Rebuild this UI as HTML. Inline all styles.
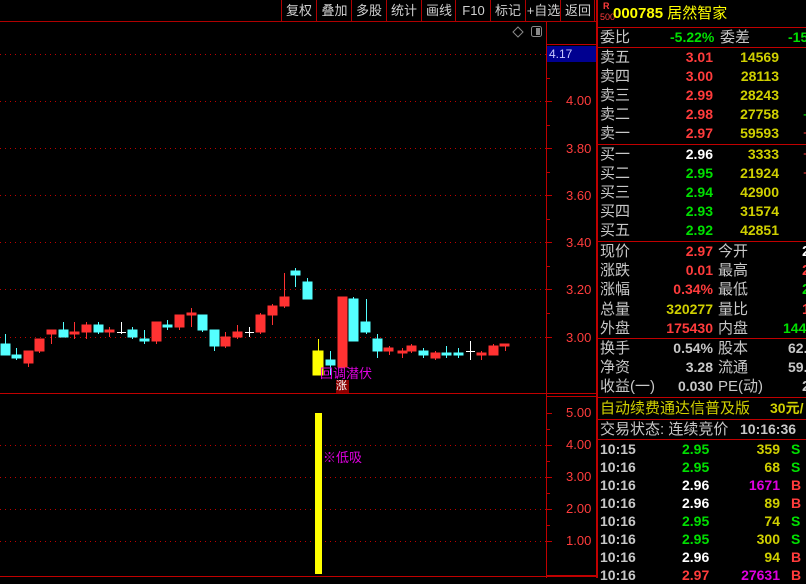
<!DOCTYPE html>
<html><head><meta charset="utf-8"><style>
body{margin:0;background:#000;width:806px;height:578px;overflow:hidden;position:relative;font-family:"Liberation Sans","Noto Sans CJK SC",sans-serif;}
.a{position:absolute;white-space:nowrap;}
.tb{position:absolute;top:0;height:21px;line-height:22px;font-size:13px;color:#d0d0d0;text-align:center;border-left:1px solid #b00000;}
.r{color:#ff3c3c}.g{color:#00e000}.w{color:#fff}.y{color:#d0d000}.gr{color:#c8c8c8}.m{color:#e000e0}
.row{position:absolute;left:600px;width:210px;height:19px;font-size:15px;line-height:19px;}
.row span{position:absolute;white-space:nowrap}
.lab{left:0;color:#c8c8c8}
.p{right:97px;text-align:right;font-weight:bold;font-size:14px}
.v{right:31px;text-align:right;font-weight:bold;font-size:14px}
.t{position:absolute;left:600px;width:206px;height:18px;font-size:14px;line-height:18px;font-weight:bold}
.t span{position:absolute;white-space:nowrap}
.hl{position:absolute;left:597px;width:209px;height:1px;background:#c00000}
.ax{position:absolute;left:566px;font-size:13px;color:#ff3c3c}
</style></head><body>
<div class="tb" style="left:281px;width:34px">复权</div>
<div class="tb" style="left:316px;width:35px">叠加</div>
<div class="tb" style="left:351px;width:34px">多股</div>
<div class="tb" style="left:386px;width:34px">统计</div>
<div class="tb" style="left:421px;width:34px">画线</div>
<div class="tb" style="left:455px;width:35px">F10</div>
<div class="tb" style="left:490px;width:34px">标记</div>
<div class="tb" style="left:525px;width:35px">+自选</div>
<div class="tb" style="left:560px;width:34px">返回</div>
<div class="a" style="left:594px;top:0;width:1px;height:21px;background:#b00000"></div>
<div class="a" style="left:0;top:21px;width:597px;height:1px;background:#b00000"></div>

<svg class="a" style="left:0;top:0" width="597" height="578">
<g stroke="#c00000" stroke-width="1" stroke-dasharray="1 4">
<line x1="0" y1="54.5" x2="546" y2="54.5"/><line x1="0" y1="101.5" x2="546" y2="101.5"/><line x1="0" y1="148.5" x2="546" y2="148.5"/><line x1="0" y1="195.5" x2="546" y2="195.5"/><line x1="0" y1="242.5" x2="546" y2="242.5"/><line x1="0" y1="289.5" x2="546" y2="289.5"/><line x1="0" y1="337.5" x2="546" y2="337.5"/>
<line x1="0" y1="445.5" x2="546" y2="445.5"/><line x1="0" y1="477.5" x2="546" y2="477.5"/><line x1="0" y1="509.5" x2="546" y2="509.5"/><line x1="0" y1="541.5" x2="546" y2="541.5"/>
</g>
<g stroke="#c00000">
<line x1="546.5" y1="22" x2="546.5" y2="578"/>
<line x1="596.5" y1="0" x2="596.5" y2="578"/>
<line x1="0" y1="393.5" x2="597" y2="393.5"/>
<line x1="0" y1="576.5" x2="597" y2="576.5"/>
<line x1="546" y1="44.5" x2="597" y2="44.5"/>
<line x1="546" y1="396.5" x2="597" y2="396.5"/>
<line x1="546" y1="575.5" x2="597" y2="575.5"/>
<g>
<line x1="547" y1="78.5" x2="550" y2="78.5"/><line x1="547" y1="101.5" x2="552" y2="101.5"/><line x1="547" y1="125.5" x2="550" y2="125.5"/><line x1="547" y1="148.5" x2="552" y2="148.5"/><line x1="547" y1="172.5" x2="550" y2="172.5"/><line x1="547" y1="195.5" x2="552" y2="195.5"/><line x1="547" y1="219.5" x2="550" y2="219.5"/><line x1="547" y1="242.5" x2="552" y2="242.5"/><line x1="547" y1="266.5" x2="550" y2="266.5"/><line x1="547" y1="289.5" x2="552" y2="289.5"/><line x1="547" y1="313.5" x2="550" y2="313.5"/><line x1="547" y1="337.5" x2="552" y2="337.5"/>
<line x1="547" y1="413.5" x2="552" y2="413.5"/><line x1="547" y1="429.5" x2="550" y2="429.5"/><line x1="547" y1="445.5" x2="552" y2="445.5"/><line x1="547" y1="461.5" x2="550" y2="461.5"/><line x1="547" y1="477.5" x2="552" y2="477.5"/><line x1="547" y1="493.5" x2="550" y2="493.5"/><line x1="547" y1="509.5" x2="552" y2="509.5"/><line x1="547" y1="525.5" x2="550" y2="525.5"/><line x1="547" y1="541.5" x2="552" y2="541.5"/>
</g></g>
<rect x="547" y="46" width="49" height="16" fill="#000090"/>
<path d="M518 27 L523 32 L518 37 L513 32 Z" fill="none" stroke="#888"/>
<rect x="531.5" y="26.5" width="10" height="10" rx="2" fill="none" stroke="#888"/><rect x="536" y="28" width="4" height="7" fill="#888"/>
<rect x="315" y="413" width="7" height="161" fill="#ffff00"/>
<rect x="336" y="380" width="13" height="13" fill="#8a0000"/>
</svg>
<svg class="a" style="left:0;top:0" width="546" height="393">
<g stroke-width="1">
<g fill="#54ffff" stroke="#54ffff">
<line x1="5.5" y1="334" x2="5.5" y2="355"/><rect x="1" y="344" width="9" height="11"/>
<line x1="16.5" y1="348" x2="16.5" y2="360"/><rect x="12" y="355" width="9" height="3"/>
<line x1="63.5" y1="322" x2="63.5" y2="337"/><rect x="59" y="330" width="9" height="7"/>
<line x1="98.5" y1="322" x2="98.5" y2="334"/><rect x="94" y="325" width="9" height="7"/>
<line x1="132.5" y1="327" x2="132.5" y2="339"/><rect x="128" y="330" width="9" height="7"/>
<line x1="144.5" y1="330" x2="144.5" y2="344"/><rect x="140" y="339" width="9" height="2"/>
<line x1="167.5" y1="320" x2="167.5" y2="330"/><rect x="163" y="325" width="9" height="2"/>
<line x1="202.5" y1="315" x2="202.5" y2="332"/><rect x="198" y="315" width="9" height="15"/>
<line x1="214.5" y1="330" x2="214.5" y2="351"/><rect x="210" y="330" width="9" height="16"/>
<line x1="295.5" y1="268" x2="295.5" y2="287"/><rect x="291" y="271" width="9" height="4"/>
<line x1="307.5" y1="278" x2="307.5" y2="299"/><rect x="303" y="282" width="9" height="17"/>
<line x1="330.5" y1="351" x2="330.5" y2="375"/><rect x="326" y="360" width="9" height="5"/>
<line x1="353.5" y1="297" x2="353.5" y2="341"/><rect x="349" y="299" width="9" height="42"/>
<line x1="366.5" y1="299" x2="366.5" y2="334"/><rect x="361" y="322" width="9" height="10"/>
<line x1="377.5" y1="334" x2="377.5" y2="358"/><rect x="373" y="339" width="9" height="12"/>
<line x1="423.5" y1="348" x2="423.5" y2="358"/><rect x="419" y="351" width="9" height="4"/>
<line x1="446.5" y1="346" x2="446.5" y2="358"/><rect x="442" y="353" width="9" height="2"/>
<line x1="458.5" y1="348" x2="458.5" y2="358"/><rect x="454" y="353" width="9" height="2"/>
</g>
<g fill="#ff3232" stroke="#ff3232">
<line x1="28.5" y1="351" x2="28.5" y2="367"/><rect x="24" y="351" width="9" height="12"/>
<rect x="35" y="339" width="9" height="12"/><line x1="39.5" y1="339" x2="39.5" y2="353"/>
<line x1="51.5" y1="330" x2="51.5" y2="344"/><rect x="47" y="330" width="9" height="4"/>
<line x1="74.5" y1="322" x2="74.5" y2="339"/><rect x="70" y="332" width="9" height="2"/>
<line x1="86.5" y1="322" x2="86.5" y2="339"/><rect x="82" y="325" width="9" height="7"/>
<line x1="109.5" y1="327" x2="109.5" y2="337"/><rect x="105" y="330" width="9" height="2"/>
<line x1="156.5" y1="322" x2="156.5" y2="344"/><rect x="152" y="322" width="9" height="19"/>
<line x1="179.5" y1="315" x2="179.5" y2="330"/><rect x="175" y="315" width="9" height="12"/>
<line x1="191.5" y1="308" x2="191.5" y2="327"/><rect x="187" y="313" width="9" height="2"/>
<line x1="225.5" y1="332" x2="225.5" y2="348"/><rect x="221" y="337" width="9" height="9"/>
<line x1="237.5" y1="325" x2="237.5" y2="339"/><rect x="233" y="332" width="9" height="5"/>
<line x1="260.5" y1="313" x2="260.5" y2="334"/><rect x="256" y="315" width="9" height="17"/>
<line x1="272.5" y1="304" x2="272.5" y2="325"/><rect x="268" y="306" width="9" height="9"/>
<line x1="284.5" y1="273" x2="284.5" y2="308"/><rect x="280" y="297" width="9" height="9"/>
<rect x="338" y="297" width="9" height="70"/>
<line x1="389.5" y1="346" x2="389.5" y2="355"/><rect x="384" y="348" width="9" height="3"/>
<line x1="402.5" y1="348" x2="402.5" y2="358"/><rect x="398" y="351" width="9" height="2"/>
<line x1="411.5" y1="344" x2="411.5" y2="353"/><rect x="407" y="346" width="9" height="5"/>
<line x1="435.5" y1="351" x2="435.5" y2="360"/><rect x="431" y="353" width="9" height="5"/>
<line x1="481.5" y1="351" x2="481.5" y2="360"/><rect x="477" y="353" width="9" height="2"/>
<line x1="493.5" y1="344" x2="493.5" y2="355"/><rect x="489" y="346" width="9" height="9"/>
<line x1="505.5" y1="344" x2="505.5" y2="351"/><rect x="500" y="344" width="9" height="2"/>
</g>
<g stroke="#fff">
<line x1="121.5" y1="322" x2="121.5" y2="334"/><line x1="117" y1="332.5" x2="126" y2="332.5"/>
<line x1="249.5" y1="327" x2="249.5" y2="337"/><line x1="245" y1="332.5" x2="254" y2="332.5"/>
<line x1="470.5" y1="341" x2="470.5" y2="360"/><line x1="466" y1="351.5" x2="475" y2="351.5"/>
</g>
<g fill="#ffff00" stroke="#ffff00"><line x1="318.5" y1="339" x2="318.5" y2="351"/><rect x="313" y="351" width="10" height="24"/></g>
</g>
</svg>
<div class="a m" style="left:320px;top:366px;font-size:13px;line-height:16px">回调潜伏</div>
<div class="a" style="left:336px;top:379px;font-size:11px;color:#fff;line-height:14px">涨</div>
<div class="a m" style="left:323px;top:447px;font-size:13px">※低吸</div>

<div class="a" style="left:549px;top:46px;font-size:12px;color:#c8c8ff;line-height:16px">4.17</div>
<div class="ax" style="top:93px">4.00</div><div class="ax" style="top:141px">3.80</div><div class="ax" style="top:188px">3.60</div><div class="ax" style="top:235px">3.40</div><div class="ax" style="top:282px">3.20</div><div class="ax" style="top:330px">3.00</div>
<div class="ax" style="top:405px">5.00</div><div class="ax" style="top:437px">4.00</div><div class="ax" style="top:469px">3.00</div><div class="ax" style="top:501px">2.00</div><div class="ax" style="top:533px">1.00</div>

<div class="a" style="left:597px;top:0;width:1px;height:578px;background:#c00000"></div>
<div class="a" style="left:603px;top:2px;font-size:9px;color:#ff3c3c;line-height:9px;font-weight:bold">R</div>
<div class="a" style="left:600px;top:12px;font-size:9px;color:#ff3c3c;line-height:10px">500</div>
<div class="a" style="left:613px;top:4px;font-size:15px;color:#ffff00;line-height:20px"><b>000785</b> 居然智家</div>
<div class="hl" style="top:27px"></div>
<div class="row" style="top:28px"><span class="lab">委比</span><span class="g" style="left:70px;font-weight:bold;font-size:14px">-5.22%</span><span class="lab" style="left:120px">委差</span><span class="g" style="left:188px;font-weight:bold;font-size:14px">-15</span></div>
<div class="hl" style="top:47px"></div>
<div class="row" style="top:48px"><span class="lab">卖五</span><span class="p r">3.01</span><span class="v y">14569</span></div>
<div class="row" style="top:67px"><span class="lab">卖四</span><span class="p r">3.00</span><span class="v y">28113</span></div>
<div class="row" style="top:86px"><span class="lab">卖三</span><span class="p r">2.99</span><span class="v y">28243</span></div>
<div class="row" style="top:105px"><span class="lab">卖二</span><span class="p r">2.98</span><span class="v y">27758</span><span class="g" style="left:203px">-</span></div>
<div class="row" style="top:124px"><span class="lab">卖一</span><span class="p r">2.97</span><span class="v y">59593</span><span class="r" style="left:203px">+</span></div>
<div class="hl" style="top:144px"></div>
<div class="row" style="top:145px"><span class="lab">买一</span><span class="p w">2.96</span><span class="v y">3333</span><span class="r" style="left:203px">+</span></div>
<div class="row" style="top:164px"><span class="lab">买二</span><span class="p g">2.95</span><span class="v y">21924</span><span class="r" style="left:203px">+</span></div>
<div class="row" style="top:183px"><span class="lab">买三</span><span class="p g">2.94</span><span class="v y">42900</span></div>
<div class="row" style="top:202px"><span class="lab">买四</span><span class="p g">2.93</span><span class="v y">31574</span></div>
<div class="row" style="top:221px"><span class="lab">买五</span><span class="p g">2.92</span><span class="v y">42851</span></div>
<div class="hl" style="top:241px"></div>
<div class="row" style="top:242px"><span class="lab">现价</span><span class="p r">2.97</span><span class="lab" style="left:118px">今开</span><span class="w" style="left:202px;font-weight:bold">2</span></div>
<div class="row" style="top:261px"><span class="lab">涨跌</span><span class="p r">0.01</span><span class="lab" style="left:118px">最高</span><span class="r" style="left:202px;font-weight:bold">2</span></div>
<div class="row" style="top:280px"><span class="lab">涨幅</span><span class="p r">0.34%</span><span class="lab" style="left:118px">最低</span><span class="g" style="left:202px;font-weight:bold">2</span></div>
<div class="row" style="top:300px"><span class="lab">总量</span><span class="p y">320277</span><span class="lab" style="left:118px">量比</span><span class="r" style="left:202px;font-weight:bold">1</span></div>
<div class="row" style="top:319px"><span class="lab">外盘</span><span class="p r">175430</span><span class="lab" style="left:118px">内盘</span><span class="g" style="left:183px;font-weight:bold;font-size:14px">144</span></div>
<div class="hl" style="top:338px"></div>
<div class="row" style="top:339px"><span class="lab">换手</span><span class="p gr">0.54%</span><span class="lab" style="left:118px">股本</span><span class="gr" style="left:188px;font-weight:bold;font-size:14px">62.</span></div>
<div class="row" style="top:358px"><span class="lab">净资</span><span class="p gr">3.28</span><span class="lab" style="left:118px">流通</span><span class="gr" style="left:188px;font-weight:bold;font-size:14px">59.</span></div>
<div class="row" style="top:377px"><span class="lab">收益(一)</span><span class="p gr">0.030</span><span class="lab" style="left:118px">PE(动)</span><span class="gr" style="left:202px;font-weight:bold">2</span></div>
<div class="hl" style="top:397px"></div>
<div class="row" style="top:399px;color:#d0d000"><span style="left:0">自动续费通达信普及版</span><span style="left:170px;font-weight:bold;font-size:14px">30元/</span></div>
<div class="hl" style="top:419px"></div>
<div class="row" style="top:420px"><span class="lab">交易状态: 连续竞价</span><span class="gr" style="left:140px;font-weight:bold;font-size:14px">10:16:36</span></div>
<div class="hl" style="top:439px"></div>
<div class="t" style="top:440px"><span class="gr" style="left:0">10:15</span><span class="g" style="left:82px">2.95</span><span class="y" style="right:26px">359</span><span class="g" style="left:191px">S</span></div>
<div class="t" style="top:458px"><span class="gr" style="left:0">10:16</span><span class="g" style="left:82px">2.95</span><span class="y" style="right:26px">68</span><span class="g" style="left:191px">S</span></div>
<div class="t" style="top:476px"><span class="gr" style="left:0">10:16</span><span class="w" style="left:82px">2.96</span><span class="m" style="right:26px">1671</span><span class="r" style="left:191px">B</span></div>
<div class="t" style="top:494px"><span class="gr" style="left:0">10:16</span><span class="w" style="left:82px">2.96</span><span class="y" style="right:26px">89</span><span class="r" style="left:191px">B</span></div>
<div class="t" style="top:512px"><span class="gr" style="left:0">10:16</span><span class="g" style="left:82px">2.95</span><span class="y" style="right:26px">74</span><span class="g" style="left:191px">S</span></div>
<div class="t" style="top:530px"><span class="gr" style="left:0">10:16</span><span class="g" style="left:82px">2.95</span><span class="y" style="right:26px">300</span><span class="g" style="left:191px">S</span></div>
<div class="t" style="top:548px"><span class="gr" style="left:0">10:16</span><span class="w" style="left:82px">2.96</span><span class="y" style="right:26px">94</span><span class="r" style="left:191px">B</span></div>
<div class="t" style="top:566px"><span class="gr" style="left:0">10:16</span><span class="r" style="left:82px">2.97</span><span class="m" style="right:26px">27631</span><span class="r" style="left:191px">B</span></div>
</body></html>
